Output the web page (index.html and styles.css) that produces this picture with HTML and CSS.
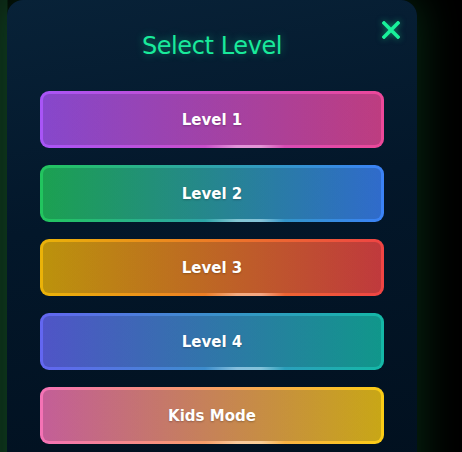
FILE: index.html
```html
<!DOCTYPE html>
<html lang="en">
<head>
    <meta charset="UTF-8">
    <meta name="viewport" content="width=device-width, initial-scale=1.0">
    <title>Select Level</title>
    <link rel="stylesheet" href="styles.css">
</head>
<body>
    <div class="overlay">
        <div class="modal">
            <button class="close" aria-label="Close">
                <svg width="18" height="18" viewBox="0 0 18 18">
                    <path d="M2 2 L16 16 M16 2 L2 16" stroke="#19f09a" stroke-width="3.6" stroke-linecap="square"/>
                </svg>
            </button>
            <h2 class="title">Select Level</h2>
            <div class="levels">
                <button class="lvl lvl-1">Level 1</button>
                <button class="lvl lvl-2">Level 2</button>
                <button class="lvl lvl-3">Level 3</button>
                <button class="lvl lvl-4">Level 4</button>
                <button class="lvl lvl-kids">Kids Mode</button>
            </div>
        </div>
    </div>
</body>
</html>
```

FILE: styles.css
```css
html, body{
    margin: 0;
    padding: 0;
    height: 100%;
    overflow: hidden;
}
body{
    background: #000;
    font-family: "DejaVu Sans", Verdana, sans-serif;
}
.overlay{
    display: flex;
    height: 100%;
    padding-left: 7px;
    background: linear-gradient(90deg, #0b1f12 0, #0b1f12 7px, #000 8px);
}
.modal{
    position: relative;
    width: 410px;
    height: 520px;
    box-sizing: border-box;
    padding: 30px 33px 0;
    border-radius: 16px;
    background: linear-gradient(170deg, #082238 0%, #03172a 40%, #010f1d 100%);
    box-shadow: 0 0 40px 4px rgba(30, 200, 90, 0.2);
}
.close{
    position: absolute;
    top: 21px;
    right: 17px;
    padding: 0;
    border: 0;
    background: none;
    filter: drop-shadow(0 0 3px rgba(25, 240, 154, 0.5));
}
.title{
    margin: 0 0 29px;
    text-align: center;
    font-weight: normal;
    font-size: 24px;
    line-height: 32px;
    letter-spacing: -0.4px;
    color: #19ea9b;
    text-shadow: 0 0 8px rgba(25, 234, 155, 0.45);
}
.levels{
    display: flex;
    flex-direction: column;
    gap: 17px;
}
.lvl{
    position: relative;
    height: 57px;
    border: 3px solid transparent;
    border-radius: 9px;
    color: #fff;
    font-family: "DejaVu Sans", Verdana, sans-serif;
    font-weight: bold;
    font-size: 15px;
    text-shadow: 0 1px 2px rgba(0, 0, 0, 0.25);
    cursor: pointer;
}
.lvl::after{
    content: "";
    position: absolute;
    left: 48%;
    bottom: -3px;
    width: 80px;
    height: 3px;
    background: linear-gradient(90deg, rgba(255,255,255,0), rgba(255,255,255,0.4) 40%, rgba(255,255,255,0.4) 70%, rgba(255,255,255,0));
}
.lvl-1{
    background:
        linear-gradient(rgba(2,16,30,0.2), rgba(2,16,30,0.2)) padding-box,
        linear-gradient(90deg, #a855f7, #ec4899) padding-box,
        linear-gradient(90deg, #a855f7, #ec4899) border-box;
}
.lvl-2{
    background:
        linear-gradient(rgba(2,16,30,0.2), rgba(2,16,30,0.2)) padding-box,
        linear-gradient(90deg, #22c55e, #3b82f6) padding-box,
        linear-gradient(90deg, #22c55e, #3b82f6) border-box;
}
.lvl-3{
    background:
        linear-gradient(rgba(2,16,30,0.2), rgba(2,16,30,0.2)) padding-box,
        linear-gradient(90deg, #eab308, #ef4444) padding-box,
        linear-gradient(90deg, #eab308, #ef4444) border-box;
}
.lvl-4{
    background:
        linear-gradient(rgba(2,16,30,0.2), rgba(2,16,30,0.2)) padding-box,
        linear-gradient(90deg, #6366f1, #14b8a6) padding-box,
        linear-gradient(90deg, #6366f1, #14b8a6) border-box;
}
.lvl-kids{
    background:
        linear-gradient(rgba(2,16,30,0.2), rgba(2,16,30,0.2)) padding-box,
        linear-gradient(90deg, #f472b6, #facc15) padding-box,
        linear-gradient(90deg, #f472b6, #facc15) border-box;
}
```
